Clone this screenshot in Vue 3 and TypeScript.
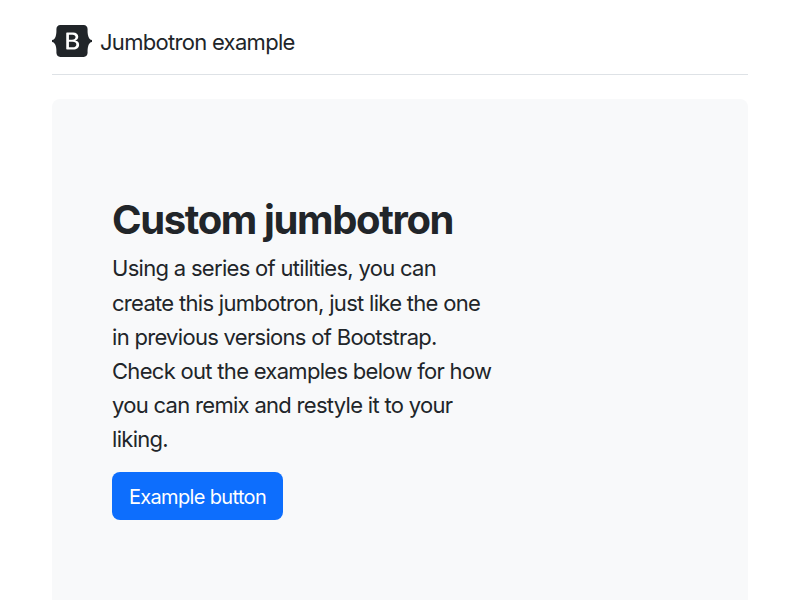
<script setup lang="ts">
const title: string = 'Jumbotron example'
</script>

<template>
  <main>
    <div class="container">
      <header class="header">
        <a href="/" class="brand">
          <svg width="40" height="32" viewBox="0 0 118 94" class="logo" role="img">
            <title>Bootstrap</title>
            <path fill-rule="evenodd" clip-rule="evenodd" fill="currentColor" d="M24.509 0c-6.733 0-11.715 5.893-11.492 12.284.214 6.14-.064 14.092-2.066 20.577C8.943 39.365 5.547 43.485 0 44.014v5.972c5.547.529 8.943 4.649 10.951 11.153 2.002 6.485 2.28 14.437 2.066 20.577C12.794 88.106 17.776 94 24.51 94H93.5c6.733 0 11.714-5.893 11.491-12.284-.214-6.14.064-14.092 2.066-20.577 2.009-6.504 5.396-10.624 10.943-11.153v-5.972c-5.547-.529-8.934-4.649-10.943-11.153-2.002-6.484-2.28-14.437-2.066-20.577C105.214 5.894 100.233 0 93.5 0H24.508zM80 57.863C80 66.663 73.436 72 62.543 72H44a2 2 0 01-2-2V24a2 2 0 012-2h18.437c9.083 0 15.044 4.92 15.044 12.474 0 5.302-4.01 10.049-9.119 10.88v.277C75.317 46.394 80 51.21 80 57.863zM60.521 28.34H49.948v14.934h8.905c6.884 0 10.68-2.772 10.68-7.727 0-4.643-3.264-7.207-9.012-7.207zM49.948 49.2v16.458H60.91c7.167 0 10.964-2.876 10.964-8.281 0-5.406-3.903-8.178-11.425-8.178H49.948z" />
          </svg>
          <span class="brand-name">{{ title }}</span>
        </a>
      </header>
      <section class="jumbotron">
        <div class="inner">
          <h1>Custom jumbotron</h1>
          <p>Using a series of utilities, you can create this jumbotron, just like the one in previous versions of Bootstrap. Check out the examples below for how you can remix and restyle it to your liking.</p>
          <button type="button">Example button</button>
        </div>
      </section>
    </div>
  </main>
</template>

<style>
body {
  background: #fff;
  overflow: hidden;
}
</style>

<style scoped>
main {
  height: 600px;
  overflow: hidden;
  font-family: Inter, sans-serif;
  color: #212529;
  line-height: 1.5;
}
.container {
  width: 696px;
  margin: 0 auto;
  padding-top: 24px;
}
.header {
  padding-bottom: 16px;
  margin-bottom: 24px;
  border-bottom: 1px solid #dee2e6;
}
.brand {
  display: flex;
  align-items: center;
  height: 34px;
  color: inherit;
  text-decoration: none;
}
.logo {
  margin-right: 8px;
}
.brand-name {
  padding-top: 2px;
  font-size: 22px;
  letter-spacing: -0.7px;
}
.jumbotron {
  height: 560px;
  background: #f8f9fa;
  border-radius: 8px;
}
.inner {
  padding: 97px 60px;
}
h1 {
  margin: 0 0 7.4px;
  font-size: 40px;
  line-height: 48px;
  font-weight: 700;
  letter-spacing: -1.37px;
}
p {
  width: 384px;
  margin: 0 0 15.4px;
  font-size: 22px;
  line-height: 34.2px;
  letter-spacing: -0.7px;
}
button {
  display: block;
  width: 171px;
  height: 48px;
  padding: 2px 0 0;
  border: 0;
  border-radius: 8px;
  background: #0d6efd;
  color: #fff;
  font-family: inherit;
  font-size: 20px;
  line-height: 30px;
  letter-spacing: -0.65px;
}
</style>
